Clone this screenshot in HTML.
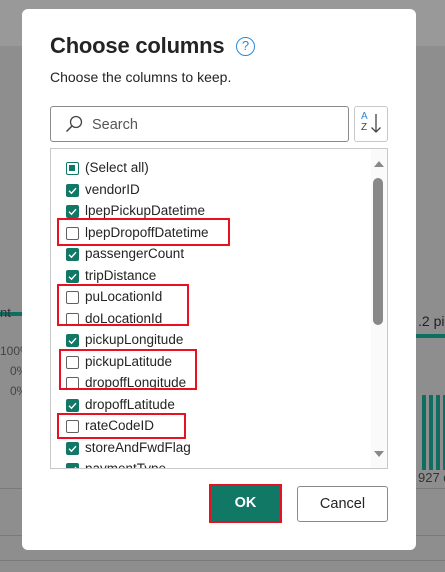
<!DOCTYPE html>
<html><head><meta charset="utf-8"><style>
*{margin:0;padding:0;box-sizing:border-box}
body{width:445px;height:572px;overflow:hidden;background:#8e8e8e;font-family:"Liberation Sans",sans-serif;position:relative}
.abs{position:absolute;white-space:nowrap}
.dlg{left:22px;top:9px;width:394px;height:541px;background:#fff;border-radius:6px}
.t{color:#242424}
.item{position:absolute;left:66px;height:20px;font-size:13.5px;color:#242424;line-height:20px}
.cb{position:absolute;left:0;top:4px;width:13px;height:13px;border-radius:2px}
.on{background:#117865}
.off{border:1px solid #616161;background:#fff}
.item span{position:absolute;left:19px;white-space:nowrap}
.red{position:absolute;border:2.5px solid #e81123}
</style></head><body>
<div class="abs" style="left:0;top:0;width:445px;height:46px;background:#999"></div>
<div class="abs" style="left:0;top:312px;width:22px;height:4px;background:#0f6e60"></div>
<div class="abs" style="left:416px;top:334px;width:29px;height:4px;background:#0f6e60"></div>
<div class="abs" style="left:0;top:488px;width:445px;height:1px;background:#7a7a7a"></div>
<div class="abs" style="left:0;top:535px;width:445px;height:1px;background:#7a7a7a"></div>
<div class="abs" style="left:0;top:560px;width:445px;height:1px;background:#7a7a7a"></div>
<div class="abs" style="left:0;top:305px;font-size:13px;color:#333">nt</div>
<div class="abs" style="left:0;top:344px;font-size:12px;color:#444">100%</div>
<div class="abs" style="left:10px;top:364px;font-size:12px;color:#444">0%</div>
<div class="abs" style="left:10px;top:384px;font-size:12px;color:#444">0%</div>
<div class="abs" style="left:418px;top:313px;font-size:14px;color:#222">.2 pi</div>
<div class="abs" style="left:418px;top:470px;font-size:13px;color:#333">927 d</div>
<div class="abs" style="left:422px;top:395px;width:24px;height:75px;background:repeating-linear-gradient(90deg,#0f6e60 0 4px,transparent 4px 7px)"></div>

<div class="abs dlg"></div>
<div class="abs t" style="left:50px;top:33px;font-size:22px;font-weight:bold;letter-spacing:-0.2px;color:#242424">Choose columns</div>
<div class="abs" style="left:236px;top:37px;width:19px;height:19px;border:1.3px solid #2b88d8;border-radius:50%;color:#2b88d8;font-size:13px;line-height:16px;text-align:center">?</div>
<div class="abs t" style="left:50px;top:69px;font-size:14px">Choose the columns to keep.</div>

<div class="abs" style="left:50px;top:106px;width:299px;height:36px;border:1px solid #8a8a8a;border-radius:3px"></div>
<svg class="abs" style="left:64px;top:114px" width="20" height="20" viewBox="0 0 20 20"><circle cx="12" cy="8" r="5.5" fill="none" stroke="#444" stroke-width="1.3"/><path d="M8 12 L2.5 17.5" stroke="#444" stroke-width="1.5"/></svg>
<div class="abs" style="left:92px;top:117px;font-size:14.5px;color:#555">Search</div>
<div class="abs" style="left:354px;top:106px;width:34px;height:36px;border:1px solid #c8c8c8;border-radius:3px"></div>
<div class="abs" style="left:361px;top:112px;font-size:10px;line-height:10px;color:#2b88d8">A</div>
<div class="abs" style="left:361px;top:123px;font-size:10px;line-height:10px;color:#444">Z</div>
<svg class="abs" style="left:370px;top:113px" width="12" height="22"><path d="M6 1 V19 M1.5 14.5 L6 19 L10.5 14.5" fill="none" stroke="#444" stroke-width="1.3"/></svg>

<div class="abs" style="left:50px;top:148px;width:338px;height:321px;border:1px solid #c8c8c8;overflow:hidden">
 <div class="abs" style="left:320px;top:0;width:17px;height:320px;background:#fafafa"></div>
 <svg class="abs" style="left:322px;top:10px" width="12" height="10"><path d="M1 8 L6 2 L11 8Z" fill="#888"/></svg>
 <div class="abs" style="left:322px;top:29px;width:10px;height:147px;border-radius:5px;background:#888"></div>
 <svg class="abs" style="left:322px;top:300px" width="12" height="10"><path d="M1 2 L6 8 L11 2Z" fill="#888"/></svg>
</div>

<div id="list"></div>
<script>
const items=[["(Select all)",2],["vendorID",1],["lpepPickupDatetime",1],["lpepDropoffDatetime",0],["passengerCount",1],["tripDistance",1],["puLocationId",0],["doLocationId",0],["pickupLongitude",1],["pickupLatitude",0],["dropoffLongitude",0],["dropoffLatitude",1],["rateCodeID",0],["storeAndFwdFlag",1],["paymentType",1]];
let h="";
items.forEach((it,i)=>{
 const y=158+i*21.5;
 if(y>460)return;
 let cb;
 if(it[1]==1)cb='<div class="cb on"><svg width="13" height="13" style="position:absolute;left:0;top:0"><path d="M3 6.8 L5.5 9.2 L10 4.2" fill="none" stroke="#fff" stroke-width="1.4"/></svg></div>';
 else if(it[1]==2)cb='<div class="cb" style="border:1.5px solid #117865;background:#fff"><div style="position:absolute;left:2px;top:2px;width:6px;height:6px;background:#117865"></div></div>';
 else cb='<div class="cb off"></div>';
 const clip=y+20>468?'overflow:hidden;height:'+(468-y)+'px;':'';
 h+='<div class="item" style="top:'+y+'px;width:250px;'+clip+'">'+cb+'<span>'+it[0]+'</span></div>';
});
document.getElementById('list').innerHTML=h;
</script>

<div class="red" style="left:57px;top:218px;width:173px;height:28px"></div>
<div class="red" style="left:57px;top:284px;width:132px;height:42px"></div>
<div class="red" style="left:59px;top:349px;width:138px;height:41px"></div>
<div class="red" style="left:57px;top:413px;width:129px;height:26px"></div>

<div class="abs" style="left:209px;top:484px;width:73px;height:39px;border:2.5px solid #e81123;background:#117865;color:#fff;font-weight:bold;font-size:14.5px;text-align:center;line-height:34px">OK</div>
<div class="abs" style="left:297px;top:486px;width:91px;height:36px;border:1px solid #8a8a8a;border-radius:3px;color:#242424;font-size:14.5px;text-align:center;line-height:34px">Cancel</div>
</body></html>
